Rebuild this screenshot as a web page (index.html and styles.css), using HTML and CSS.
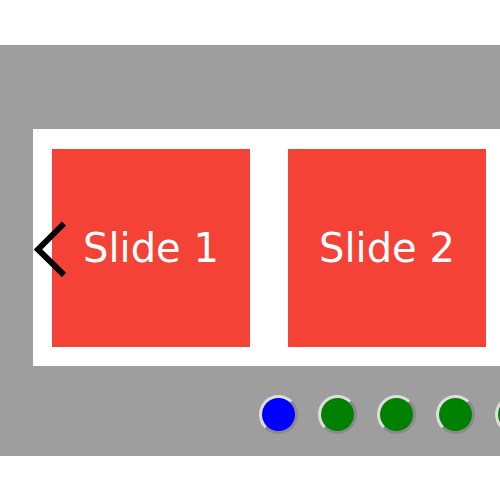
FILE: index.html
```
<!DOCTYPE html>
<html lang="en">
<head>
<meta charset="utf-8">
<title>Slider</title>
<link rel="stylesheet" href="styles.css">
</head>
<body>
<section class="slider">
  <div class="viewport">
    <div class="track">
      <div class="slide">Slide 1</div>
      <div class="slide">Slide 2</div>
    </div>
    <button class="prev" type="button" aria-label="Previous slide">
      <svg width="34" height="58" viewBox="0 0 34 58" aria-hidden="true"><path d="M31 4.5 5 30.500 31 56" fill="none" stroke="#000" stroke-width="6"/></svg>
    </button>
  </div>
  <div class="dots">
    <button class="dot active" type="button" aria-label="Go to slide 1"></button>
    <button class="dot" type="button" aria-label="Go to slide 2"></button>
    <button class="dot" type="button" aria-label="Go to slide 3"></button>
    <button class="dot" type="button" aria-label="Go to slide 4"></button>
    <button class="dot" type="button" aria-label="Go to slide 5"></button>
  </div>
</section>
</body>
</html>
```
FILE: styles.css
```
* {
  box-sizing: border-box;
}

body {
  margin: 0;
  background: #fff;
  font-family: Verdana, "DejaVu Sans", sans-serif;
}

.slider {
  margin-top: 45px;
  padding: 84px 0 22px 33px;
  background: #9e9e9e;
  overflow: hidden;
}

.viewport {
  position: relative;
  background: #fff;
}

.track {
  display: flex;
  gap: 38px;
  padding: 20px 19px 19px;
  overflow: hidden;
}

.slide {
  display: flex;
  flex: none;
  align-items: center;
  justify-content: center;
  width: 198px;
  height: 198px;
  background: #f44336;
  color: #fff;
  font-size: 40px;
}

.prev {
  position: absolute;
  top: 50%;
  left: 0;
  display: flex;
  padding: 0;
  border: 0;
  background: none;
  transform: translateY(-50%);
}

.dots {
  display: flex;
  gap: 20px;
  margin-top: 29px;
  padding-left: 226px;
}

.dot {
  flex: none;
  width: 39px;
  height: 39px;
  padding: 0;
  border: 3px solid;
  border-color: #dedede #8a8a8a #8a8a8a #dedede;
  border-radius: 50%;
  background: green;
}

.active {
  background: blue;
}
```
